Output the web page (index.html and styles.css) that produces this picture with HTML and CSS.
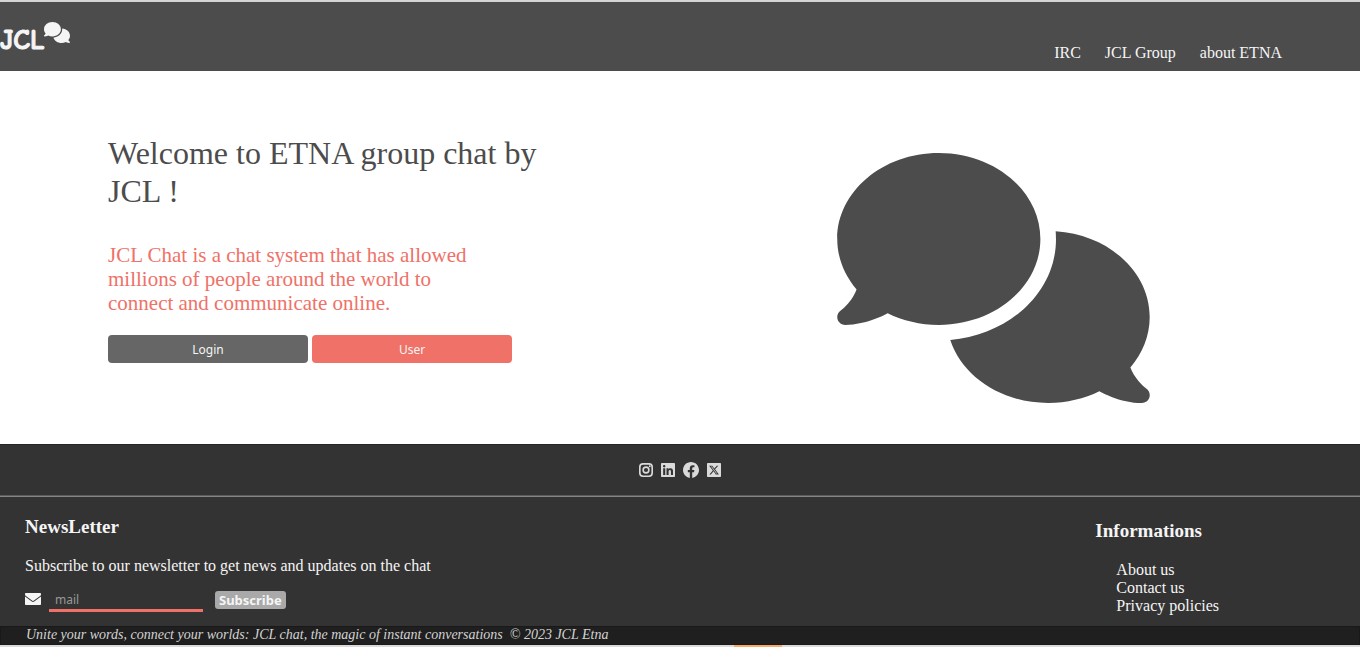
FILE: index.html
```
<!DOCTYPE html>
<html lang="en">
<head>
<meta charset="utf-8">
<title>JCL Chat</title>
<link rel="stylesheet" href="styles.css">
</head>
<body>
<svg class="sprite" aria-hidden="true">
  <symbol id="comments" viewBox="0 0 640 512"><path d="M208 352c114.9 0 208-78.8 208-176S322.9 0 208 0S0 78.8 0 176c0 38.6 14.7 74.3 39.6 103.4c-3.5 9.4-8.7 17.7-14.2 24.7c-4.8 6.2-9.7 11-13.3 14.3c-1.8 1.6-3.3 2.9-4.3 3.7c-.5 .4-.9 .7-1.1 .8l-.2 .2C1 327.2-1.4 334.4 .8 340.9S9.1 352 16 352c21.8 0 43.8-5.6 62.1-12.5c9.2-3.5 17.8-7.4 25.2-11.4C134.1 343.3 169.8 352 208 352zM448 176c0 112.3-99.1 196.9-216.5 207C255.8 457.4 336.4 512 432 512c38.2 0 73.9-8.7 104.7-23.9c7.5 4 16 7.9 25.2 11.4c18.3 6.9 40.3 12.5 62.1 12.5c6.9 0 13.1-4.5 15.2-11.1c2.1-6.6-.2-13.8-5.8-17.9l-.2-.2c-.2-.2-.6-.4-1.1-.8c-1-.8-2.5-2-4.3-3.7c-3.6-3.3-8.5-8.1-13.3-14.3c-5.5-7-10.7-15.4-14.2-24.7c24.9-29 39.6-64.7 39.6-103.4c0-92.8-84.9-168.9-192.6-175.5c.4 5.1 .6 10.3 .6 15.5z"/></symbol>
</svg>
<header class="header">
  <a class="logo" href="#">JCL<svg class="logo-icon" aria-hidden="true"><use href="#comments"/></svg></a>
  <nav class="nav">
    <a href="#">IRC</a>
    <a href="#">JCL Group</a>
    <a href="#">about ETNA</a>
  </nav>
</header>
<main class="hero">
  <section class="intro">
    <h1 class="title">Welcome to ETNA group chat by JCL !</h1>
    <p class="lead">JCL Chat is a chat system that has allowed millions of people around the world to connect and communicate online.</p>
    <div class="actions">
      <button class="btn btn-login" type="button">Login</button>
      <button class="btn btn-user" type="button">User</button>
    </div>
  </section>
  <div class="art"><svg class="art-icon" aria-hidden="true"><use href="#comments"/></svg></div>
</main>
<footer class="footer">
  <div class="social">
    <a href="#" aria-label="Instagram"><svg width="14" height="16" viewBox="0 0 448 512"><rect x="26" y="58" width="396" height="396" rx="104" fill="none" stroke="currentColor" stroke-width="52"/><circle cx="224" cy="256" r="92" fill="none" stroke="currentColor" stroke-width="50"/><circle cx="343" cy="137" r="30" fill="currentColor"/></svg></a>
    <a href="#" aria-label="LinkedIn"><svg width="14" height="16" viewBox="0 0 448 512"><path fill="currentColor" d="M416 32H31.9C14.3 32 0 46.5 0 64.3v383.4C0 465.5 14.3 480 31.9 480H416c17.6 0 32-14.5 32-32.3V64.3c0-17.8-14.4-32.3-32-32.3zM135.4 416H69V202.2h66.5V416zm-33.2-243c-21.3 0-38.5-17.3-38.5-38.5S80.9 96 102.2 96c21.2 0 38.5 17.3 38.5 38.5 0 21.3-17.2 38.5-38.5 38.5zm282.1 243h-66.4V312c0-24.8-.5-56.7-34.5-56.7-34.6 0-39.9 27-39.9 54.9V416h-66.4V202.2h63.7v29.2h.9c8.9-16.8 30.6-34.5 62.9-34.5 67.2 0 79.7 44.3 79.7 101.9V416z"/></svg></a>
    <a href="#" aria-label="Facebook"><svg width="16" height="16" viewBox="0 0 512 512"><path fill="currentColor" d="M512 256C512 115 397 0 256 0S0 115 0 256c0 123.8 90.7 230 217.2 252V327.7h-63V256h63v-54.6c0-62.2 37-96.5 93.7-96.5 27.1 0 55.5 4.8 55.5 4.8v61h-31.3c-30.8 0-40.4 19.1-40.4 38.7V256h68.8l-11 71.7h-57.8V508C421 486 512 379.8 512 256z"/></svg></a>
    <a href="#" aria-label="X"><svg width="14" height="16" viewBox="0 0 448 512"><path fill="currentColor" d="M32 32C14 32 0 46 0 64V448c0 18 14 32 32 32H416c18 0 32-14 32-32V64c0-18-14-32-32-32H32zm329.1 84L257.3 234.6 379.4 396H283.8L209 298.1 123.3 396H75.8l111-126.9L69.7 116h98l67.7 89.5L313.6 116h47.5zM323.3 367.6L153.4 142.9H125.1L296.9 367.6h26.3z"/></svg></a>
  </div>
  <hr class="rule">
  <div class="columns">
    <section class="newsletter">
      <h2 class="heading">NewsLetter</h2>
      <p class="text">Subscribe to our newsletter to get news and updates on the chat</p>
      <form class="form">
        <label class="mail-label" for="mail" aria-label="mail"><svg width="16" height="16" viewBox="0 0 512 512" aria-hidden="true"><path fill="currentColor" d="M24 64C10 64 0 75 0 88v24c0 15.1 7.1 29.3 19.2 38.4L236.8 313.6c11.4 8.5 27 8.5 38.4 0L492.8 150.4c12.1-9.1 19.2-23.3 19.2-38.4V88c0-13-10-24-24-24H24zM0 176V416c0 18 14 32 32 32H480c18 0 32-14 32-32V176L294.4 339.2c-22.8 17.1-54 17.1-76.8 0L0 176z"/></svg></label>
        <input class="mail" id="mail" type="email" placeholder="mail">
        <button class="subscribe" type="button">Subscribe</button>
      </form>
    </section>
    <section class="info">
      <h2 class="heading">Informations</h2>
      <ul class="links">
        <li><a href="#">About us</a></li>
        <li><a href="#">Contact us</a></li>
        <li><a href="#">Privacy policies</a></li>
      </ul>
    </section>
  </div>
  <p class="tagline">Unite your words, connect your worlds: JCL chat, the magic of instant conversations &nbsp;© 2023 JCL Etna</p>
</footer>
<div class="strip"><span class="strip-mark"></span></div>
</body>
</html>
```
FILE: styles.css
```
* { box-sizing: border-box; }
body {
  margin: 0;
  background: #fff;
  color: #f5f5f5;
  font: 16px/18px "Liberation Serif", "Times New Roman", serif;
}
a { color: inherit; text-decoration: none; }
.sprite { position: absolute; width: 0; height: 0; }
.header {
  display: flex;
  justify-content: space-between;
  height: 71px;
  border-top: 2px solid #d3d5d5;
  background: #4c4c4c;
}
.logo {
  display: flex;
  align-items: flex-start;
  padding-top: 20px;
  font: bold 28px/36px "Comic Sans MS", "Comic Neue", Lato, sans-serif;
  -webkit-text-stroke: 1px currentColor;
}
.logo-icon { width: 26px; height: 21px; fill: currentColor; }
.nav {
  display: flex;
  align-items: flex-end;
  gap: 24px;
  padding: 0 78px 9px 0;
}
.hero {
  display: flex;
  min-height: 373px;
  color: #4c4c4c;
}
.intro { width: 50%; padding: 63px 108px 0; }
.title {
  margin: 0 0 33px;
  font-size: 32px;
  line-height: 38px;
  font-weight: normal;
}
.lead {
  max-width: 376px;
  margin: 0 0 20px;
  color: #ef7168;
  font-size: 21px;
  line-height: 24px;
}
.actions { display: flex; gap: 4px; }
.btn {
  width: 200px;
  height: 28px;
  padding: 0;
  border: 0;
  border-radius: 4px;
  color: #f5f5f5;
  font: 12px "Noto Sans", sans-serif;
}
.btn-login { background: #666; }
.btn-user { background: #ef7168; }
.art {
  display: flex;
  flex: 1;
  justify-content: center;
  padding: 82px 53px 0 0;
}
.art-icon { width: 313px; height: 250px; fill: currentColor; }
.footer { background: #333; border-top: 1px solid #262626; }
.social {
  display: flex;
  justify-content: center;
  gap: 8px;
  padding: 17px 0;
  color: #dadada;
}
.social svg { display: block; }
.rule {
  height: 2px;
  margin: 0;
  border: 0;
  border-top: 1px solid #5c5c5c;
  background: #858585;
}
.columns {
  display: flex;
  justify-content: space-between;
  padding: 0 141px 11px 25px;
}
.heading { margin: 0 0 20px; font-size: 19px; line-height: 20px; }
.newsletter { padding-top: 20px; }
.text { margin: 0 0 14px; }
.form { display: flex; align-items: flex-start; }
.mail-label { display: flex; padding-top: 2px; margin-right: 8px; }
.mail {
  width: 154px;
  height: 23px;
  margin-right: 12px;
  padding: 1px 6px 0;
  border: 0;
  border-bottom: 3px solid #ef7168;
  background: none;
  color: #f5f5f5;
  font: 12px "Noto Sans", sans-serif;
}
.mail::placeholder { color: #999; opacity: 1; }
.subscribe {
  height: 18px;
  margin-top: 2px;
  padding: 0 4px;
  border: 0;
  border-radius: 3px;
  background: #a9a9a9;
  color: #f5f5f5;
  font: bold 13px/18px "Noto Sans", sans-serif;
}
.info { padding-top: 24px; }
.links { margin: 0; padding: 0 0 0 21px; list-style: none; }
.tagline {
  margin: 0;
  padding: 0 25px 1px;
  border: 1px solid #191919;
  background: #1f1f1f;
  color: #d3d3d3;
  font-size: 14px;
  line-height: 16px;
  font-style: italic;
}
.strip { display: flex; height: 2px; background: #ddd9d9; }
.strip-mark { width: 48px; margin-left: 54%; background: #f9a868; }
```
